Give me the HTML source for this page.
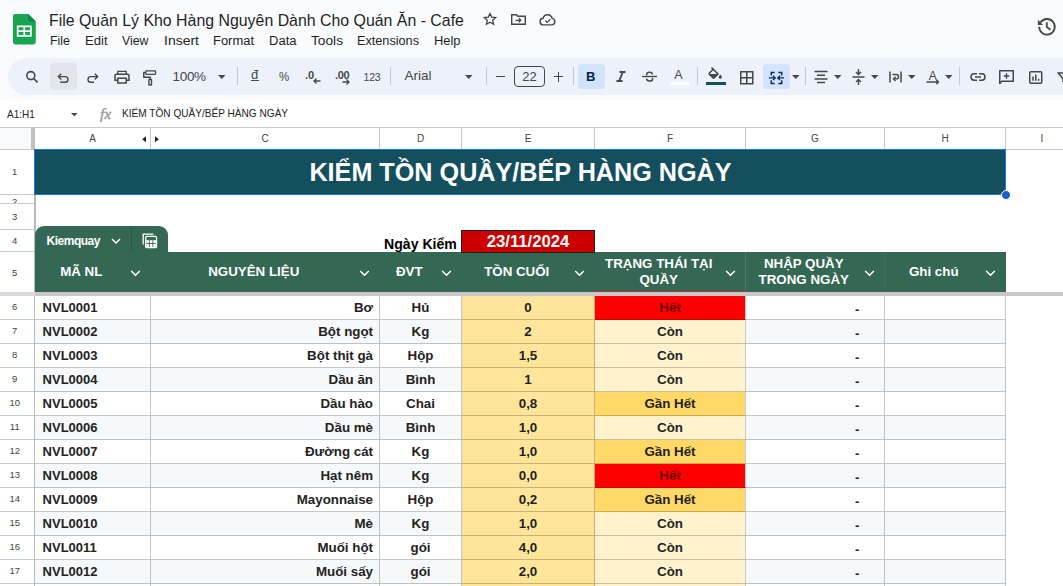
<!DOCTYPE html>
<html><head><meta charset="utf-8">
<style>
*{box-sizing:border-box;margin:0;padding:0}
html,body{width:1063px;height:586px;overflow:hidden;background:#f9fbfd;font-family:"Liberation Sans",sans-serif;color:#1f1f1f}
.abs{position:absolute}
#title{position:absolute;left:49px;top:10.2px;font-size:16.6px;line-height:22px;color:#1f1f1f;white-space:nowrap;transform:scaleX(.957);transform-origin:0 0}
#menu{position:absolute;left:0;top:32px;font-size:12.5px;line-height:18px;color:#1f1f1f;white-space:nowrap}
#menu span{position:absolute;top:0;transform-origin:0 0}
#toolbar{position:absolute;left:8px;top:58px;width:1080px;height:37px;border-radius:19px;background:#edf2fa}
#fbar{position:absolute;left:0;top:100px;width:1063px;height:28px;background:#fff}
#grid{position:absolute;left:0;top:0;width:1063px;height:586px}
.t{position:absolute;white-space:nowrap}
.ch{position:absolute;top:127px;height:23px;background:#fff;border-right:1px solid #c9c9c9;border-top:1px solid #c9c9c9;border-bottom:1px solid #c9c9c9;font-size:10px;color:#444;text-align:center;line-height:21px}
.rh{position:absolute;left:0;width:35px;background:#fff;border-right:1px solid #c9c9c9;border-bottom:1px solid #c9c9c9;font-size:9.5px;color:#444;text-align:center;padding-right:4.5px}
.c{position:absolute;height:24px;border-right:1px solid rgba(0,0,0,.22);border-bottom:1px solid rgba(0,0,0,.22);font-size:13.33px;font-weight:bold;line-height:23px;color:#222;white-space:nowrap;overflow:hidden}
.hd{position:absolute;color:#fff;font-weight:bold;font-size:13.33px;text-align:center;white-space:nowrap;line-height:16px}
.tb{position:absolute}
</style></head><body>

<svg class="abs" style="left:13px;top:14.400px" width="22.800" height="30.400" viewBox="0 0 22.800 30.400"><path d="M2.400 0H15.300l7.500 7.500v20.500a2.400 2.400 0 0 1-2.400 2.400h-18A2.400 2.400 0 0 1 0 28V2.400A2.400 2.400 0 0 1 2.400 0z" fill="#17a552"/><path d="M15.300 0l7.500 7.500h-5.500a2 2 0 0 1-2-2z" fill="#0d8a43"/><path d="M3.800 11.600h15v11.100h-15zM5.500 13.300v3h4.900v-3zm6.600 0v3h5v-3zM5.500 18v3h4.900v-3zm6.600 0v3h5v-3z" fill="#fff" fill-rule="evenodd"/></svg>
<div id="title">File Quản Lý Kho Hàng Nguyên Dành Cho Quán Ăn - Cafe</div>
<div id="menu"><span style="left:49.5px;transform:scaleX(0.993)">File</span><span style="left:85px;transform:scaleX(1.045)">Edit</span><span style="left:122px;transform:scaleX(0.986)">View</span><span style="left:164px;transform:scaleX(1.120)">Insert</span><span style="left:213px;transform:scaleX(1.036)">Format</span><span style="left:269px;transform:scaleX(1.041)">Data</span><span style="left:311px;transform:scaleX(1.096)">Tools</span><span style="left:357px;transform:scaleX(1.014)">Extensions</span><span style="left:434px;transform:scaleX(1.031)">Help</span></div>
<div id="toolbar"></div>
<!-- title icons -->
<svg class="abs" style="left:483px;top:12px" width="14" height="14" viewBox="0 0 24 24"><path d="M12 2.500l2.900 6.300 6.900.700-5.200 4.600 1.500 6.800L12 17.400l-6.100 3.500 1.500-6.800L2.200 9.500l6.900-.700z" fill="none" stroke="#444746" stroke-width="2.200" stroke-linejoin="miter"/></svg>
<svg class="abs" style="left:511px;top:14px" width="15" height="11" viewBox="0 0 15 11"><path d="M.700 2.200V.700h4.800l1.200 1.500h7.600v8.100H.700z" fill="none" stroke="#444746" stroke-width="1.400"/><path d="M4.500 6.300h5M7.800 4.300l2 2-2 2" fill="none" stroke="#444746" stroke-width="1.300"/></svg>
<svg class="abs" style="left:539px;top:14px" width="18" height="12" viewBox="0 0 18 12"><path d="M4.600 10.900a3.300 3.300 0 0 1-.500-6.600 4.600 4.600 0 0 1 8.900-.200 3.500 3.500 0 0 1 .300 6.800z" fill="none" stroke="#444746" stroke-width="1.400"/><path d="M6.300 6.600l1.800 1.800 3.300-3.300" fill="none" stroke="#444746" stroke-width="1.300"/></svg>
<svg class="abs" style="left:1036.700px;top:17px" width="20" height="20" viewBox="0 0 20 20"><path d="M3.400 5.640A7.800 7.800 0 1 1 2.200 9.800" fill="none" stroke="#444746" stroke-width="1.800"/><path d="M.900 2.800V7.900H6z" fill="#444746"/><path d="M9.800 5.200v4.800l3.700 2.800" fill="none" stroke="#444746" stroke-width="1.800"/></svg>
<!-- toolbar -->
<div class="abs" style="left:50px;top:63px;width:27px;height:27px;border-radius:4px;background:#e2e6ec"></div>
<div class="abs" style="left:578px;top:63.500px;width:27px;height:25.500px;border-radius:4px;background:#d3e3fd"></div>
<div class="abs" style="left:763px;top:63.500px;width:27px;height:25.500px;border-radius:4px;background:#d3e3fd"></div>
<svg class="abs" style="left:25px;top:70px" width="15" height="14" viewBox="0 0 15 14"><circle cx="5.800" cy="5.600" r="4" fill="none" stroke="#444746" stroke-width="1.600"/><path d="M8.700 8.500l3.900 3.900" stroke="#444746" stroke-width="1.700"/></svg>
<svg class="abs" style="left:57px;top:72px" width="13" height="12" viewBox="0 0 13 12"><path d="M1.500 4.600h6.700a2.800 2.800 0 0 1 0 5.600H3.200" fill="none" stroke="#444746" stroke-width="1.400"/><path d="M4.200 1.800L1.400 4.600l2.800 2.800" fill="none" stroke="#444746" stroke-width="1.400"/></svg>
<svg class="abs" style="left:86px;top:72px" width="13" height="12" viewBox="0 0 13 12"><path d="M11.500 4.600H4.800a2.800 2.800 0 0 0 0 5.600H8" fill="none" stroke="#444746" stroke-width="1.400"/><path d="M8.800 1.800L11.600 4.600 8.800 7.400" fill="none" stroke="#444746" stroke-width="1.400"/></svg>
<svg class="abs" style="left:114px;top:70px" width="16" height="14" viewBox="0 0 16 14"><path d="M3.800 4.200V1.400h8.400v2.800" fill="none" stroke="#444746" stroke-width="1.300"/><path d="M3.800 10.200H1V5.700a1.500 1.500 0 0 1 1.500-1.500h11A1.500 1.500 0 0 1 15 5.700v4.500h-2.800" fill="none" stroke="#444746" stroke-width="1.500"/><rect x="3.800" y="8.200" width="8.400" height="4.800" fill="none" stroke="#444746" stroke-width="1.500"/></svg>
<svg class="abs" style="left:143px;top:70px" width="14" height="16" viewBox="0 0 14 16"><rect x="2.800" y=".900" width="9.800" height="3.400" rx=".800" fill="none" stroke="#444746" stroke-width="1.300"/><path d="M2.800 2.600H.800v4.600h6.400v2.300" fill="none" stroke="#444746" stroke-width="1.500"/><rect x="5.900" y="9.500" width="2.600" height="5.500" rx=".500" fill="none" stroke="#444746" stroke-width="1.400"/></svg>
<div class="t" style="left:172.500px;top:69px;font-size:13.500px;line-height:16px;color:#444746;letter-spacing:-0.3px">100%</div>
<svg class="abs" style="left:218px;top:75px" width="8" height="4"><path d="M0 0h7.500L3.750 4z" fill="#444746"/></svg>
<div class="abs" style="left:237px;top:67px;width:1px;height:18px;background:#c7c7c7"></div>
<div class="t" style="left:251px;top:67px;font-size:13px;line-height:16px;color:#444746">đ</div>
<div class="abs" style="left:251px;top:80px;width:7.500px;height:1.200px;background:#444746"></div>
<div class="t" style="left:278.500px;top:68.500px;font-size:12.500px;line-height:16px;color:#444746;transform:scaleX(.92);transform-origin:0 0">%</div>
<div class="t" style="left:305px;top:66.500px;font-size:11px;line-height:16px;color:#444746;font-weight:bold">.0</div>
<svg class="abs" style="left:313px;top:78px" width="8" height="6"><path d="M7.500 3H1.500M3.500 .500L1 3l2.500 2.500" fill="none" stroke="#444746" stroke-width="1.300"/></svg>
<div class="t" style="left:335px;top:66.500px;font-size:11px;line-height:16px;color:#444746;font-weight:bold;letter-spacing:-0.3px">.00</div>
<svg class="abs" style="left:342px;top:79px" width="8" height="6"><path d="M.500 3h6M4.500 .500L7 3 4.500 5.500" fill="none" stroke="#444746" stroke-width="1.300"/></svg>
<div class="t" style="left:363.500px;top:69.500px;font-size:10.500px;line-height:14px;color:#444746;letter-spacing:-0.2px">123</div>
<div class="abs" style="left:390px;top:67px;width:1px;height:18px;background:#c7c7c7"></div>
<div class="t" style="left:404.500px;top:68px;font-size:13.500px;line-height:16px;color:#444746">Arial</div>
<svg class="abs" style="left:465px;top:75px" width="8" height="4"><path d="M0 0h7.500L3.750 4z" fill="#444746"/></svg>
<div class="abs" style="left:486px;top:67px;width:1px;height:18px;background:#c7c7c7"></div>
<div class="abs" style="left:495.500px;top:76px;width:9.500px;height:1.400px;background:#444746"></div>
<div class="abs" style="left:514px;top:66px;width:31px;height:21px;border:1px solid #444746;border-radius:4px"></div>
<div class="t" style="left:514px;top:69px;width:31px;text-align:center;font-size:13px;line-height:16px;color:#444746">22</div>
<div class="abs" style="left:553.500px;top:76px;width:9.500px;height:1.400px;background:#444746"></div>
<div class="abs" style="left:557.500px;top:72px;width:1.400px;height:9.500px;background:#444746"></div>
<div class="abs" style="left:573px;top:67px;width:1px;height:18px;background:#c7c7c7"></div>
<div class="t" style="left:586px;top:69px;font-size:13px;line-height:16px;color:#041e49;font-weight:bold">B</div>
<svg class="abs" style="left:615.600px;top:71.200px" width="10" height="11" viewBox="0 0 10 11"><path d="M3.500 1h6M.500 10h6M6.800 1L3.200 10" fill="none" stroke="#444746" stroke-width="1.900"/></svg>
<svg class="abs" style="left:642px;top:70px" width="15" height="13" viewBox="0 0 15 13"><path d="M0 6.500h15" stroke="#444746" stroke-width="1.300"/><path d="M10.400 4.400C10.200 3 9.100 2.300 7.500 2.300 5.800 2.300 4.700 3.100 4.700 4.300c0 .400.100.700.300 1M4.500 8.700c.200 1.500 1.400 2.300 3.100 2.300 1.800 0 3-.800 3-2.100 0-.400-.100-.700-.300-1" fill="none" stroke="#444746" stroke-width="1.500"/></svg>
<div class="t" style="left:674.300px;top:67px;font-size:12.500px;line-height:16px;color:#444746">A</div>
<div class="abs" style="left:669.500px;top:82px;width:19px;height:3px;background:#fff"></div>
<div class="abs" style="left:697px;top:67px;width:1px;height:18px;background:#c7c7c7"></div>
<svg class="abs" style="left:708px;top:67px" width="15" height="13" viewBox="0 0 15 13"><path d="M5.200 2.300l4.800 4.800-3.700 3.700a1 1 0 0 1-1.400 0L1.500 7.400a1 1 0 0 1 0-1.400z" fill="none" stroke="#444746" stroke-width="1.500"/><path d="M1.300 6.900h8.400L6 10.600 4.800 10.800z" fill="#444746"/><path d="M3.500.600l2 2" stroke="#444746" stroke-width="1.500"/><path d="M12.300 7.500s1.500 1.700 1.500 2.700a1.500 1.500 0 0 1-3 0c0-1 1.500-2.700 1.500-2.700z" fill="#444746"/></svg>
<div class="abs" style="left:706px;top:82px;width:20px;height:3px;background:#134f5c"></div>
<svg class="abs" style="left:740px;top:70.500px" width="14" height="14" viewBox="0 0 14 14"><rect x=".750" y=".750" width="12" height="12" fill="none" stroke="#444746" stroke-width="1.500"/><path d="M6.750 .750v12M.750 6.750h12" stroke="#444746" stroke-width="1.500"/></svg>
<svg class="abs" style="left:769px;top:70.500px" width="15" height="14" viewBox="0 0 15 14"><path d="M5.600 1.400H2.300V4.600M9.400 1.400h3.300V4.600M5.600 12.400H2.300V9.200M9.400 12.400h3.300V9.200" fill="none" stroke="#0b2d63" stroke-width="1.500"/><path d="M0 6.900h6M4 4.700l2.200 2.200L4 9.100M15 6.900H9M11 4.700L8.800 6.900 11 9.100" fill="none" stroke="#0b2d63" stroke-width="1.400"/></svg>
<svg class="abs" style="left:792px;top:75px" width="8" height="4"><path d="M0 0h7.500L3.750 4z" fill="#444746"/></svg>
<div class="abs" style="left:805px;top:67px;width:1px;height:18px;background:#c7c7c7"></div>
<svg class="abs" style="left:814px;top:70px" width="14" height="14" viewBox="0 0 14 14"><path d="M.500 1.500h13M3 5.200h8M.500 8.900h13M3 12.600h8" stroke="#444746" stroke-width="1.500"/></svg>
<svg class="abs" style="left:834px;top:75px" width="8" height="4"><path d="M0 0h7.500L3.750 4z" fill="#444746"/></svg>
<svg class="abs" style="left:852px;top:69px" width="13" height="16" viewBox="0 0 13 16"><path d="M.500 8h12" stroke="#444746" stroke-width="1.500"/><path d="M6.500 0v5M4 3l2.500 2.500L9 3M6.500 16v-5M4 13l2.500-2.500L9 13" fill="none" stroke="#444746" stroke-width="1.400"/></svg>
<svg class="abs" style="left:871px;top:75px" width="8" height="4"><path d="M0 0h7.500L3.750 4z" fill="#444746"/></svg>
<svg class="abs" style="left:889px;top:71px" width="13" height="12" viewBox="0 0 13 12"><path d="M1 .500v11M12 .500v11" stroke="#444746" stroke-width="1.500"/><path d="M3.500 3.500h3.800a2.200 2.200 0 0 1 0 4.400H5" fill="none" stroke="#444746" stroke-width="1.400"/><path d="M6.600 5.800L4.500 7.900l2.100 2.100" fill="none" stroke="#444746" stroke-width="1.300"/></svg>
<svg class="abs" style="left:908px;top:75px" width="8" height="4"><path d="M0 0h7.500L3.750 4z" fill="#444746"/></svg>
<div class="t" style="left:928.800px;top:67.500px;font-size:12px;line-height:16px;color:#444746">A</div>
<svg class="abs" style="left:926px;top:78.500px" width="14" height="7" viewBox="0 0 14 7"><path d="M.500 3h12M10.300 .800l2.200 2.200-2.200 2.200" fill="none" stroke="#444746" stroke-width="1.300"/></svg>
<svg class="abs" style="left:945px;top:75px" width="8" height="4"><path d="M0 0h7.500L3.750 4z" fill="#444746"/></svg>
<div class="abs" style="left:959px;top:67px;width:1px;height:18px;background:#c7c7c7"></div>
<svg class="abs" style="left:970px;top:73px" width="16" height="8" viewBox="0 0 16 8"><path d="M7 .800H4.200a3.200 3.200 0 0 0 0 6.400H7M9 .800h2.800a3.200 3.200 0 0 1 0 6.400H9M5 4h6" fill="none" stroke="#444746" stroke-width="1.500"/></svg>
<svg class="abs" style="left:999px;top:70px" width="15" height="15" viewBox="0 0 15 15"><path d="M.750 13.500V.750h13.500v10.500H3z" fill="none" stroke="#444746" stroke-width="1.500" stroke-linejoin="round"/><path d="M7.500 3.200v5.600M4.700 6h5.600" stroke="#444746" stroke-width="1.400"/></svg>
<svg class="abs" style="left:1028.500px;top:70.500px" width="14" height="13" viewBox="0 0 14 13"><rect x=".750" y=".750" width="12" height="11.500" rx="1.200" fill="none" stroke="#444746" stroke-width="1.500"/><path d="M4 5.500v4.200M6.800 3.500v6.200M9.600 7.800v1.900" stroke="#444746" stroke-width="1.500"/></svg>
<svg class="abs" style="left:1057px;top:72px" width="8" height="10" viewBox="0 0 8 10"><path d="M11 1H1.200l4.800 5.800v4" fill="none" stroke="#444746" stroke-width="1.600"/></svg>

<div id="fbar"><div class="t" style="left:7px;top:7.800px;font-size:11px;color:#222;transform:scaleX(.91);transform-origin:0 0">A1:H1</div>
<svg class="abs" style="left:71px;top:12.500px" width="8" height="4"><path d="M0 0h6.600L3.300 3.300z" fill="#444"/></svg>
<div class="t" style="left:100px;top:4.500px;font-size:15.500px;font-style:italic;font-family:'Liberation Serif',serif;color:#9a9a9a;-webkit-text-stroke:.4px #9a9a9a">fx</div>
<div class="t" style="left:121.500px;top:7px;font-size:11px;color:#222;transform:scaleX(.917);transform-origin:0 0">KIỂM TỒN QUẦY/BẾP HÀNG NGÀY</div></div>
<div class="abs" style="left:0;top:128px;width:1063px;height:458px;background:#fff"></div>
<div class="ch" style="left:0;width:35px;background:#f8f9fa;border-right:4px solid #c0c0c0"></div>
<div class="ch" style="left:35px;width:116px">A</div>
<div class="ch" style="left:151px;width:229px">C</div>
<div class="ch" style="left:380px;width:82px">D</div>
<div class="ch" style="left:462px;width:133px">E</div>
<div class="ch" style="left:595px;width:151px">F</div>
<div class="ch" style="left:746px;width:139px">G</div>
<div class="ch" style="left:885px;width:121px">H</div>
<div class="ch" style="left:1006px;width:73px">I</div>
<svg class="abs" style="left:141px;top:135px" width="20" height="9"><path d="M5 1.200v6L1.200 4.200zM14 1.200v6l3.800-3z" fill="#222"/></svg>
<div class="rh" style="top:150px;height:45px;line-height:43.5px;">1</div>
<div class="rh" style="top:195px;height:9px;line-height:14px;overflow:hidden;">2</div>
<div class="rh" style="top:204px;height:26px;line-height:26.5px;">3</div>
<div class="rh" style="top:230px;height:22px;line-height:22.5px;">4</div>
<div class="rh" style="top:252px;height:44px;line-height:42.5px;">5</div>
<div class="rh" style="top:296px;height:24px;line-height:22.5px;">6</div>
<div class="rh" style="top:320px;height:24px;line-height:22.5px;">7</div>
<div class="rh" style="top:344px;height:24px;line-height:22.5px;">8</div>
<div class="rh" style="top:368px;height:24px;line-height:22.5px;">9</div>
<div class="rh" style="top:392px;height:24px;line-height:22.5px;">10</div>
<div class="rh" style="top:416px;height:24px;line-height:22.5px;">11</div>
<div class="rh" style="top:440px;height:24px;line-height:22.5px;">12</div>
<div class="rh" style="top:464px;height:24px;line-height:22.5px;">13</div>
<div class="rh" style="top:488px;height:24px;line-height:22.5px;">14</div>
<div class="rh" style="top:512px;height:24px;line-height:22.5px;">15</div>
<div class="rh" style="top:536px;height:24px;line-height:22.5px;">16</div>
<div class="rh" style="top:560px;height:24px;line-height:22.5px;">17</div>
<div class="rh" style="top:584px;height:24px;line-height:22.5px;">18</div>
<div class="abs" style="left:34px;top:150px;width:1.500px;height:436px;background:#b4bac0"></div>
<div class="abs" style="left:34px;top:149px;width:972px;height:46px;background:#134f5c;border:1px solid #1a73e8;color:#fff;font-weight:bold;font-size:25.2px;line-height:44.5px;padding-left:1px;text-align:center;white-space:nowrap">KIỂM TỒN QUẦY/BẾP HÀNG NGÀY</div>
<div class="abs" style="left:1001px;top:190px;width:10px;height:10px;border-radius:5px;background:#1a5fd0;border:1px solid #fff"></div>
<div class="t" style="left:384px;top:236.200px;font-size:14.100px;font-weight:bold;color:#000">Ngày Kiểm</div>
<div class="abs" style="left:35px;top:226px;width:133px;height:27px;background:#356854;border-radius:9px 9px 0 0"></div>
<div class="t" style="left:46.600px;top:234px;font-size:12px;font-weight:bold;color:#fff;letter-spacing:-0.5px">Kiemquay</div>
<svg class="abs" style="left:111px;top:238px" width="10" height="7"><path d="M1 1l4 4 4-4" fill="none" stroke="#fff" stroke-width="1.500"/></svg>
<div class="abs" style="left:130.700px;top:227px;width:1px;height:25px;background:#2a5746"></div>
<svg class="abs" style="left:141.500px;top:232.800px" width="16" height="16" viewBox="0 0 16 16"><path d="M1.200 11.500V1.200H11.500" fill="none" stroke="#fff" stroke-width="1.300"/><rect x="3.700" y="3.300" width="10.800" height="11.300" rx="1.200" fill="none" stroke="#fff" stroke-width="1.300"/><path d="M4.300 7.200h9.600v6.800H4.300z" fill="#fff"/><path d="M7.400 7.200v6.800M10.800 7.200v6.800M4.300 10.500h9.600" stroke="#356854" stroke-width=".900"/></svg>
<div class="abs" style="left:35px;top:252px;width:971px;height:40px;background:#356854"></div>
<div class="hd" style="left:35px;top:263.5px;width:92.5px">MÃ NL</div>
<svg class="abs" style="left:130px;top:269.500px" width="11" height="7"><path d="M1.200 1l4.300 4.300L9.800 1" fill="none" stroke="#fff" stroke-width="1.500"/></svg>
<div class="hd" style="left:151px;top:263.5px;width:205.5px">NGUYÊN LIỆU</div>
<svg class="abs" style="left:359px;top:269.500px" width="11" height="7"><path d="M1.200 1l4.300 4.300L9.800 1" fill="none" stroke="#fff" stroke-width="1.500"/></svg>
<div class="hd" style="left:380px;top:263.5px;width:58.5px">ĐVT</div>
<svg class="abs" style="left:441px;top:269.500px" width="11" height="7"><path d="M1.200 1l4.300 4.300L9.800 1" fill="none" stroke="#fff" stroke-width="1.500"/></svg>
<div class="hd" style="left:462px;top:263.5px;width:109.5px">TỒN CUỐI</div>
<svg class="abs" style="left:574px;top:269.500px" width="11" height="7"><path d="M1.200 1l4.300 4.300L9.800 1" fill="none" stroke="#fff" stroke-width="1.500"/></svg>
<div class="hd" style="left:595px;top:255.8px;width:127.5px">TRẠNG THÁI TẠI<br>QUẦY</div>
<svg class="abs" style="left:725px;top:269.500px" width="11" height="7"><path d="M1.200 1l4.300 4.300L9.800 1" fill="none" stroke="#fff" stroke-width="1.500"/></svg>
<div class="hd" style="left:746px;top:255.8px;width:115.5px">NHẬP QUẦY<br>TRONG NGÀY</div>
<svg class="abs" style="left:864px;top:269.500px" width="11" height="7"><path d="M1.200 1l4.300 4.300L9.800 1" fill="none" stroke="#fff" stroke-width="1.500"/></svg>
<div class="hd" style="left:885px;top:263.5px;width:97.5px">Ghi chú</div>
<svg class="abs" style="left:985px;top:269.500px" width="11" height="7"><path d="M1.200 1l4.300 4.300L9.800 1" fill="none" stroke="#fff" stroke-width="1.500"/></svg>
<div class="abs" style="left:461px;top:230px;width:134px;height:23px;background:#cc0000;border:1px solid #222;color:#fff;font-weight:bold;font-size:16.700px;line-height:22px;text-align:center">23/11/2024</div>
<div class="abs" style="left:0;top:292px;width:1063px;height:4px;background:#c8c8c8"></div>
<div class="abs" style="left:0;top:292px;width:35px;height:4px;background:#dadada"></div>
<div class="abs" style="left:595px;top:290.500px;width:151px;height:1.500px;background:#a8342a"></div>
<div class="abs" style="left:745px;top:252px;width:1px;height:39px;background:#4b7b67"></div>
<div class="abs" style="left:884px;top:252px;width:1px;height:39px;background:#3d6f5b"></div>
<div class="c" style="left:35px;top:296px;width:116px;background:#fff;padding-left:7.600px;font-size:13px">NVL0001</div>
<div class="c" style="left:151px;top:296px;width:229px;background:#fff;text-align:right;padding-right:6px">Bơ</div>
<div class="c" style="left:380px;top:296px;width:82px;background:#fff;text-align:center">Hủ</div>
<div class="c" style="left:462px;top:296px;width:133px;background:#ffe599;text-align:center">0</div>
<div class="c" style="left:595px;top:296px;width:151px;background:#ff0000;color:#700808;text-align:center;border-right-color:#c9c9c9">Hết</div>
<div class="c" style="left:746px;top:296px;width:139px;background:#fff;text-align:right;padding-right:24.500px;line-height:27px">-</div>
<div class="c" style="left:885px;top:296px;width:121px;background:#fff"></div>
<div class="c" style="left:35px;top:320px;width:116px;background:#f6f8f9;padding-left:7.600px;font-size:13px">NVL0002</div>
<div class="c" style="left:151px;top:320px;width:229px;background:#f6f8f9;text-align:right;padding-right:6px">Bột ngọt</div>
<div class="c" style="left:380px;top:320px;width:82px;background:#f6f8f9;text-align:center">Kg</div>
<div class="c" style="left:462px;top:320px;width:133px;background:#ffe599;text-align:center">2</div>
<div class="c" style="left:595px;top:320px;width:151px;background:#fff2cc;color:#222;text-align:center;border-right-color:#c9c9c9">Còn</div>
<div class="c" style="left:746px;top:320px;width:139px;background:#f6f8f9;text-align:right;padding-right:24.500px;line-height:27px">-</div>
<div class="c" style="left:885px;top:320px;width:121px;background:#f6f8f9"></div>
<div class="c" style="left:35px;top:344px;width:116px;background:#fff;padding-left:7.600px;font-size:13px">NVL0003</div>
<div class="c" style="left:151px;top:344px;width:229px;background:#fff;text-align:right;padding-right:6px">Bột thịt gà</div>
<div class="c" style="left:380px;top:344px;width:82px;background:#fff;text-align:center">Hộp</div>
<div class="c" style="left:462px;top:344px;width:133px;background:#ffe599;text-align:center">1,5</div>
<div class="c" style="left:595px;top:344px;width:151px;background:#fff2cc;color:#222;text-align:center;border-right-color:#c9c9c9">Còn</div>
<div class="c" style="left:746px;top:344px;width:139px;background:#fff;text-align:right;padding-right:24.500px;line-height:27px">-</div>
<div class="c" style="left:885px;top:344px;width:121px;background:#fff"></div>
<div class="c" style="left:35px;top:368px;width:116px;background:#f6f8f9;padding-left:7.600px;font-size:13px">NVL0004</div>
<div class="c" style="left:151px;top:368px;width:229px;background:#f6f8f9;text-align:right;padding-right:6px">Dầu ăn</div>
<div class="c" style="left:380px;top:368px;width:82px;background:#f6f8f9;text-align:center">Bình</div>
<div class="c" style="left:462px;top:368px;width:133px;background:#ffe599;text-align:center">1</div>
<div class="c" style="left:595px;top:368px;width:151px;background:#fff2cc;color:#222;text-align:center;border-right-color:#c9c9c9">Còn</div>
<div class="c" style="left:746px;top:368px;width:139px;background:#f6f8f9;text-align:right;padding-right:24.500px;line-height:27px">-</div>
<div class="c" style="left:885px;top:368px;width:121px;background:#f6f8f9"></div>
<div class="c" style="left:35px;top:392px;width:116px;background:#fff;padding-left:7.600px;font-size:13px">NVL0005</div>
<div class="c" style="left:151px;top:392px;width:229px;background:#fff;text-align:right;padding-right:6px">Dầu hào</div>
<div class="c" style="left:380px;top:392px;width:82px;background:#fff;text-align:center">Chai</div>
<div class="c" style="left:462px;top:392px;width:133px;background:#ffe599;text-align:center">0,8</div>
<div class="c" style="left:595px;top:392px;width:151px;background:#ffd966;color:#222;text-align:center;border-right-color:#c9c9c9">Gần Hết</div>
<div class="c" style="left:746px;top:392px;width:139px;background:#fff;text-align:right;padding-right:24.500px;line-height:27px">-</div>
<div class="c" style="left:885px;top:392px;width:121px;background:#fff"></div>
<div class="c" style="left:35px;top:416px;width:116px;background:#f6f8f9;padding-left:7.600px;font-size:13px">NVL0006</div>
<div class="c" style="left:151px;top:416px;width:229px;background:#f6f8f9;text-align:right;padding-right:6px">Dầu mè</div>
<div class="c" style="left:380px;top:416px;width:82px;background:#f6f8f9;text-align:center">Bình</div>
<div class="c" style="left:462px;top:416px;width:133px;background:#ffe599;text-align:center">1,0</div>
<div class="c" style="left:595px;top:416px;width:151px;background:#fff2cc;color:#222;text-align:center;border-right-color:#c9c9c9">Còn</div>
<div class="c" style="left:746px;top:416px;width:139px;background:#f6f8f9;text-align:right;padding-right:24.500px;line-height:27px">-</div>
<div class="c" style="left:885px;top:416px;width:121px;background:#f6f8f9"></div>
<div class="c" style="left:35px;top:440px;width:116px;background:#fff;padding-left:7.600px;font-size:13px">NVL0007</div>
<div class="c" style="left:151px;top:440px;width:229px;background:#fff;text-align:right;padding-right:6px">Đường cát</div>
<div class="c" style="left:380px;top:440px;width:82px;background:#fff;text-align:center">Kg</div>
<div class="c" style="left:462px;top:440px;width:133px;background:#ffe599;text-align:center">1,0</div>
<div class="c" style="left:595px;top:440px;width:151px;background:#ffd966;color:#222;text-align:center;border-right-color:#c9c9c9">Gần Hết</div>
<div class="c" style="left:746px;top:440px;width:139px;background:#fff;text-align:right;padding-right:24.500px;line-height:27px">-</div>
<div class="c" style="left:885px;top:440px;width:121px;background:#fff"></div>
<div class="c" style="left:35px;top:464px;width:116px;background:#f6f8f9;padding-left:7.600px;font-size:13px">NVL0008</div>
<div class="c" style="left:151px;top:464px;width:229px;background:#f6f8f9;text-align:right;padding-right:6px">Hạt nêm</div>
<div class="c" style="left:380px;top:464px;width:82px;background:#f6f8f9;text-align:center">Kg</div>
<div class="c" style="left:462px;top:464px;width:133px;background:#ffe599;text-align:center">0,0</div>
<div class="c" style="left:595px;top:464px;width:151px;background:#ff0000;color:#700808;text-align:center;border-right-color:#c9c9c9">Hết</div>
<div class="c" style="left:746px;top:464px;width:139px;background:#f6f8f9;text-align:right;padding-right:24.500px;line-height:27px">-</div>
<div class="c" style="left:885px;top:464px;width:121px;background:#f6f8f9"></div>
<div class="c" style="left:35px;top:488px;width:116px;background:#fff;padding-left:7.600px;font-size:13px">NVL0009</div>
<div class="c" style="left:151px;top:488px;width:229px;background:#fff;text-align:right;padding-right:6px">Mayonnaise</div>
<div class="c" style="left:380px;top:488px;width:82px;background:#fff;text-align:center">Hộp</div>
<div class="c" style="left:462px;top:488px;width:133px;background:#ffe599;text-align:center">0,2</div>
<div class="c" style="left:595px;top:488px;width:151px;background:#ffd966;color:#222;text-align:center;border-right-color:#c9c9c9">Gần Hết</div>
<div class="c" style="left:746px;top:488px;width:139px;background:#fff;text-align:right;padding-right:24.500px;line-height:27px">-</div>
<div class="c" style="left:885px;top:488px;width:121px;background:#fff"></div>
<div class="c" style="left:35px;top:512px;width:116px;background:#f6f8f9;padding-left:7.600px;font-size:13px">NVL0010</div>
<div class="c" style="left:151px;top:512px;width:229px;background:#f6f8f9;text-align:right;padding-right:6px">Mè</div>
<div class="c" style="left:380px;top:512px;width:82px;background:#f6f8f9;text-align:center">Kg</div>
<div class="c" style="left:462px;top:512px;width:133px;background:#ffe599;text-align:center">1,0</div>
<div class="c" style="left:595px;top:512px;width:151px;background:#fff2cc;color:#222;text-align:center;border-right-color:#c9c9c9">Còn</div>
<div class="c" style="left:746px;top:512px;width:139px;background:#f6f8f9;text-align:right;padding-right:24.500px;line-height:27px">-</div>
<div class="c" style="left:885px;top:512px;width:121px;background:#f6f8f9"></div>
<div class="c" style="left:35px;top:536px;width:116px;background:#fff;padding-left:7.600px;font-size:13px">NVL0011</div>
<div class="c" style="left:151px;top:536px;width:229px;background:#fff;text-align:right;padding-right:6px">Muối hột</div>
<div class="c" style="left:380px;top:536px;width:82px;background:#fff;text-align:center">gói</div>
<div class="c" style="left:462px;top:536px;width:133px;background:#ffe599;text-align:center">4,0</div>
<div class="c" style="left:595px;top:536px;width:151px;background:#fff2cc;color:#222;text-align:center;border-right-color:#c9c9c9">Còn</div>
<div class="c" style="left:746px;top:536px;width:139px;background:#fff;text-align:right;padding-right:24.500px;line-height:27px">-</div>
<div class="c" style="left:885px;top:536px;width:121px;background:#fff"></div>
<div class="c" style="left:35px;top:560px;width:116px;background:#f6f8f9;padding-left:7.600px;font-size:13px">NVL0012</div>
<div class="c" style="left:151px;top:560px;width:229px;background:#f6f8f9;text-align:right;padding-right:6px">Muối sấy</div>
<div class="c" style="left:380px;top:560px;width:82px;background:#f6f8f9;text-align:center">gói</div>
<div class="c" style="left:462px;top:560px;width:133px;background:#ffe599;text-align:center">2,0</div>
<div class="c" style="left:595px;top:560px;width:151px;background:#fff2cc;color:#222;text-align:center;border-right-color:#c9c9c9">Còn</div>
<div class="c" style="left:746px;top:560px;width:139px;background:#f6f8f9;text-align:right;padding-right:24.500px;line-height:27px">-</div>
<div class="c" style="left:885px;top:560px;width:121px;background:#f6f8f9"></div>
<div class="c" style="left:35px;top:584px;width:116px;background:#fff;padding-left:7.600px;font-size:13px"></div>
<div class="c" style="left:151px;top:584px;width:229px;background:#fff;text-align:right;padding-right:6px"></div>
<div class="c" style="left:380px;top:584px;width:82px;background:#fff;text-align:center"></div>
<div class="c" style="left:462px;top:584px;width:133px;background:#ffe599;text-align:center"></div>
<div class="c" style="left:595px;top:584px;width:151px;background:#fff2cc;color:#222;text-align:center;border-right-color:#c9c9c9"></div>
<div class="c" style="left:746px;top:584px;width:139px;background:#fff;text-align:right;padding-right:24.500px;line-height:27px"></div>
<div class="c" style="left:885px;top:584px;width:121px;background:#fff"></div>
</body></html>
